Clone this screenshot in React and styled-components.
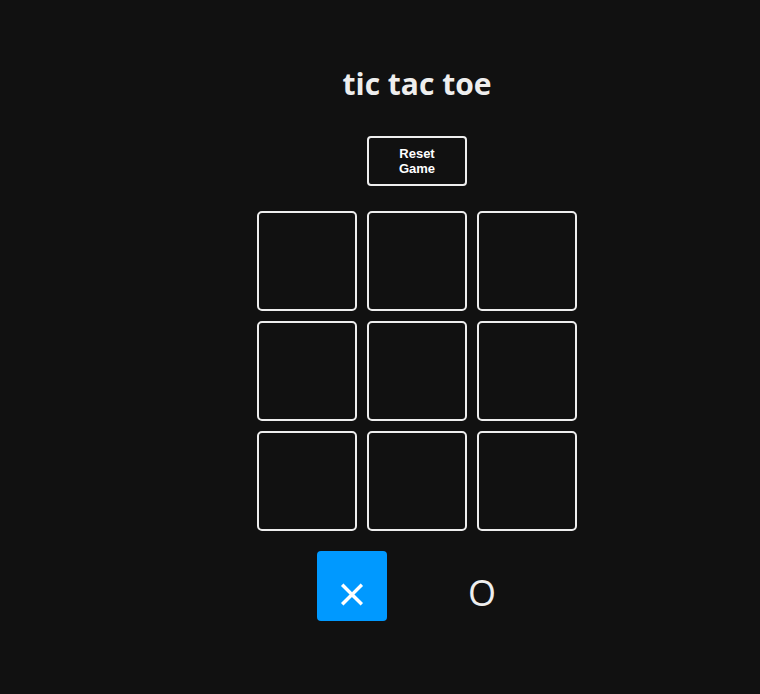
import React, { useState } from 'react';
import styled, { createGlobalStyle } from 'styled-components';

const Global = createGlobalStyle`
  html, body {
    margin: 0;
    padding: 0;
    background: #111111;
    color: #eeeeee;
    font-family: "Open Sans", "Liberation Sans", sans-serif;
  }
`

const Page = styled.div`
  min-height: 694px;
  display: flex;
  flex-direction: column;
  align-items: center;
  padding-left: 74px;
  box-sizing: border-box;
`

const Title = styled.h1`
  margin: 64px 0 0 0;
  font-size: 30px;
  font-weight: 700;
  line-height: 40px;
  color: #eeeeee;
`

const ResetButton = styled.button`
  margin-top: 32px;
  width: 100px;
  height: 50px;
  padding: 0 20px;
  background: transparent;
  color: #ffffff;
  border: 2px solid #eeeeee;
  border-radius: 4px;
  font-family: "Liberation Sans", Arial, sans-serif;
  font-weight: 700;
  font-size: 13px;
  line-height: 15px;
  cursor: pointer;
`

const Board = styled.div`
  margin-top: 25px;
  display: grid;
  grid-template-columns: repeat(3, 100px);
  grid-auto-rows: 100px;
  gap: 10px;
`

const Cell = styled.button`
  background: transparent;
  border: 2px solid #eeeeee;
  border-radius: 5px;
  color: #eeeeee;
  font-size: 40px;
  cursor: pointer;
`

const Turns = styled.div`
  margin-top: 20px;
  display: flex;
  gap: 60px;
`

const Turn = styled.div`
  width: 70px;
  height: 70px;
  box-sizing: border-box;
  padding-top: 14px;
  border-radius: 4px;
  display: flex;
  align-items: center;
  justify-content: center;
  background: ${p => (p.$active ? '#0099ff' : 'transparent')};
  color: ${p => (p.$active ? '#ffffff' : '#eeeeee')};
  font-family: "Open Sans", "Liberation Sans", sans-serif;
  font-size: ${p => p.$size}px;
  line-height: 1;
`

export default function App() {
  const [cells] = useState(Array(9).fill(''));
  return (
    <>
      <Global />
      <Page>
        <Title>tic tac toe</Title>
        <ResetButton>Reset Game</ResetButton>
        <Board>
          {cells.map((c, i) => <Cell key={i}>{c}</Cell>)}
        </Board>
        <Turns>
          <Turn $active $size={50}>×</Turn>
          <Turn $size={36}>O</Turn>
        </Turns>
      </Page>
    </>
  );
}
